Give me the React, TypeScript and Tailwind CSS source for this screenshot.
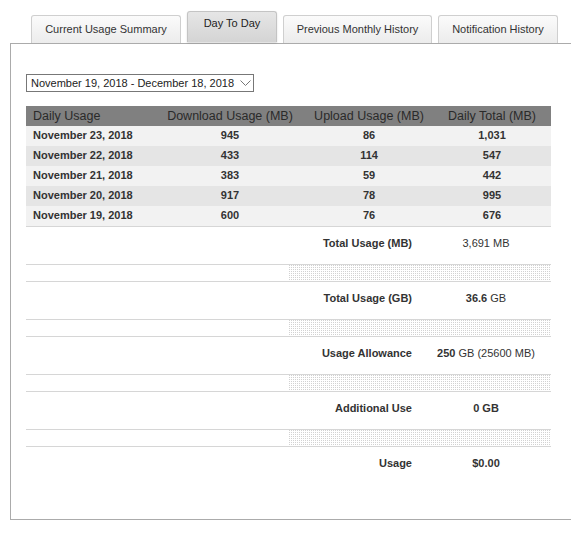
import React from "react";

const rows = [
  { date: "November 23, 2018", down: "945", up: "86", total: "1,031" },
  { date: "November 22, 2018", down: "433", up: "114", total: "547" },
  { date: "November 21, 2018", down: "383", up: "59", total: "442" },
  { date: "November 20, 2018", down: "917", up: "78", total: "995" },
  { date: "November 19, 2018", down: "600", up: "76", total: "676" },
];

const tabs = [
  { label: "Current Usage Summary", width: "w-[150px]", active: false },
  { label: "Day To Day", width: "w-[90px]", active: true },
  { label: "Previous Monthly History", width: "w-[149px]", active: false },
  { label: "Notification History", width: "w-[120px]", active: false },
];

const SummaryRow = ({ label, children }: { label: string; children: React.ReactNode }) => (
  <div className="grid h-[37px] grid-cols-[262px_133px_130px] pt-[10px] text-[11px] leading-[13px]">
    <div />
    <div className="pr-[9px] text-right font-bold">{label}</div>
    <div className="text-center">{children}</div>
  </div>
);

const HatchRow = () => (
  <div className="flex h-[18px] border-y border-[#d6d6d6]">
    <div className="w-[262px]" />
    <div className="flex-1 bg-[conic-gradient(#d2d2d2_25%,#ffffff_0)] bg-[length:2px_2px]" />
  </div>
);

export default function App() {
  return (
    <div className="h-[539px] w-[571px] overflow-hidden bg-white font-['Liberation_Sans',Arial,sans-serif] text-[#333]">
      {/* tabs */}
      <div className="flex h-[43px] items-end gap-[6px] pl-[31px]">
        {tabs.map((t) =>
          t.active ? (
            <div
              key={t.label}
              className={`${t.width} mb-[1px] h-[31px] rounded-t-[3px] border border-b-0 border-[#c4c4c4] bg-gradient-to-b from-[#e6e6e6] to-[#d4d4d4] pt-[5px] text-center text-[11px] leading-[13px] text-[#222] shadow-[0_1px_2px_rgba(0,0,0,0.15)]`}
            >
              {t.label}
            </div>
          ) : (
            <div
              key={t.label}
              className={`${t.width} flex h-[28px] items-center justify-center rounded-t-[3px] border border-b-0 border-[#cfcfcf] bg-gradient-to-b from-[#fbfbfb] to-[#ececec] text-[11px] text-[#333]`}
            >
              {t.label}
            </div>
          )
        )}
      </div>

      {/* panel */}
      <div className="ml-[10px] h-[477px] w-[561px] border-y border-l border-[#ababab] pl-[15px] pt-[30px]">
        {/* date select */}
        <div className="flex h-[18px] w-[228px] items-center whitespace-nowrap border border-[#777] pl-[4px] text-[11px] text-[#222]">
          <span>November 19, 2018 - December 18, 2018</span>
          <svg className="ml-auto mr-[2px]" width="11" height="7" viewBox="0 0 11 7">
            <polyline points="0.5,0.5 5.5,5.5 10.5,0.5" fill="none" stroke="#777" strokeWidth="1" />
          </svg>
        </div>

        {/* daily table */}
        <div className="mt-[14px] w-[525px] border-b border-[#d6d6d6]">
          <div className="grid h-[20px] grid-cols-[129px_150px_128px_118px] items-center bg-[#808080] text-[12.5px] text-[#2a2a2a]">
            <div className="pl-[7px]">Daily Usage</div>
            <div className="text-center">Download Usage (MB)</div>
            <div className="text-center">Upload Usage (MB)</div>
            <div className="text-center">Daily Total (MB)</div>
          </div>
          {rows.map((r, i) => (
            <div
              key={r.date}
              className={`grid h-[20px] grid-cols-[129px_150px_128px_118px] items-center pb-[2px] text-[11px] font-bold ${
                i % 2 === 0 ? "bg-[#f2f2f2]" : "bg-[#e5e5e5]"
              }`}
            >
              <div className="pl-[7px]">{r.date}</div>
              <div className="text-center">{r.down}</div>
              <div className="text-center">{r.up}</div>
              <div className="text-center">{r.total}</div>
            </div>
          ))}
        </div>

        {/* summary */}
        <div className="w-[525px]">
          <SummaryRow label="Total Usage (MB)">3,691 MB</SummaryRow>
          <HatchRow />
          <SummaryRow label="Total Usage (GB)">
            <span className="font-bold">36.6</span> GB
          </SummaryRow>
          <HatchRow />
          <SummaryRow label="Usage Allowance">
            <span className="font-bold">250</span> GB (25600 MB)
          </SummaryRow>
          <HatchRow />
          <SummaryRow label="Additional Use">
            <span className="font-bold">0 GB</span>
          </SummaryRow>
          <HatchRow />
          <SummaryRow label="Usage">
            <span className="font-bold">$0.00</span>
          </SummaryRow>
        </div>
      </div>
    </div>
  );
}
